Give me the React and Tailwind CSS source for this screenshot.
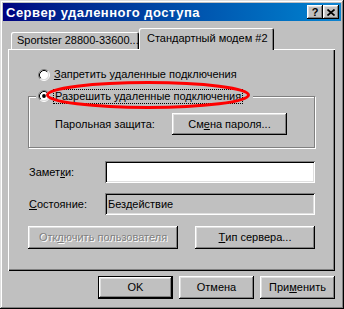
import React from "react";

const raised =
  "shadow-[inset_-1px_-1px_#000,inset_1px_1px_#fff,inset_-2px_-2px_#808080,inset_2px_2px_#dfdfdf]";
const sunken =
  "shadow-[inset_1px_1px_#808080,inset_-1px_-1px_#fff,inset_2px_2px_#000,inset_-2px_-2px_#dfdfdf]";

function Radio({ checked }) {
  return (
    <svg width="12" height="12" viewBox="0 0 12 12" className="shrink-0">
      <circle cx="6" cy="6" r="4.5" fill="#fff" />
      <path d="M2.11 9.89 A5.5 5.5 0 0 1 9.89 2.11" fill="none" stroke="#808080" strokeWidth="1" />
      <path d="M9.89 2.11 A5.5 5.5 0 0 1 2.11 9.89" fill="none" stroke="#fff" strokeWidth="1" />
      <path d="M2.82 9.18 A4.5 4.5 0 0 1 9.18 2.82" fill="none" stroke="#000" strokeWidth="1" />
      <path d="M9.18 2.82 A4.5 4.5 0 0 1 2.82 9.18" fill="none" stroke="#dfdfdf" strokeWidth="1" />
      {checked && <circle cx="6" cy="6" r="1.9" fill="#000" />}
    </svg>
  );
}

function U({ children }) {
  return <span className="underline underline-offset-[1px] decoration-1">{children}</span>;
}

export default function App() {
  return (
    <div className="relative w-[344px] h-[309px] bg-[#c0c0c0] p-[3px] font-['Liberation_Sans',Arial,sans-serif] text-[11px] leading-none text-black shadow-[inset_-1px_-1px_#000,inset_1px_1px_#dfdfdf,inset_-2px_-2px_#808080,inset_2px_2px_#fff]">
      {/* Title bar */}
      <div className="h-[18px] flex items-center bg-gradient-to-r from-[#000080] to-[#1084d0] pl-[3px] pr-[2px]">
        <span className="font-bold text-white text-[13px] tracking-[0.5px]">Сервер удаленного доступа</span>
        <div className="ml-auto flex">
          <div className={`w-[16px] h-[14px] bg-[#c0c0c0] flex items-center justify-center font-bold text-[11px] ${raised}`}>
            ?
          </div>
          <div className={`w-[16px] h-[14px] bg-[#c0c0c0] flex items-center justify-center ${raised}`}>
            <svg width="8" height="7" viewBox="0 0 8 7">
              <path d="M0.5 0.5 L7.5 6.5 M7.5 0.5 L0.5 6.5" stroke="#000" strokeWidth="1.7" />
            </svg>
          </div>
        </div>
      </div>

      {/* Tabs */}
      <div className="mt-[7px] ml-[5px] flex items-end h-[21px]">
        <div className="ml-[3px] w-[128px] h-[17px] flex items-center pl-[6px] rounded-t-[2px] shadow-[inset_1px_1px_#fff,inset_-1px_0_#000,inset_-2px_0_#808080]">
          Sportster 28800-33600...
        </div>
        <div className="relative z-10 -mb-px w-[135px] h-[22px] bg-[#c0c0c0] flex items-center pl-[8px] pb-[2px] rounded-t-[2px] shadow-[inset_1px_1px_#fff,inset_-1px_0_#000,inset_-2px_0_#808080]">
          Стандартный модем #2
        </div>
      </div>

      {/* Panel */}
      <div className="ml-[5px] w-[327px] h-[222px] pl-[20px] pt-[19px] shadow-[inset_1px_1px_#fff,inset_-1px_-1px_#000,inset_-2px_-2px_#808080]">
        <div className="ml-[10px] flex items-center h-[13px] gap-[4px]">
          <Radio />
          <span>
            <U>З</U>апретить удаленные подключения
          </span>
        </div>

        <fieldset className="mt-[8px] w-[287px] border border-[#808080] shadow-[inset_1px_1px_#fff,1px_1px_#fff] pl-[26px] pb-[12px]">
          <legend className="-ml-[19px] pl-[2px] pr-[10px] bg-[#c0c0c0]">
            <div className="flex items-center h-[14px] gap-[3px]">
              <Radio checked />
              <span className="border border-dotted border-black px-px py-[1px]">
                Разрешить удаленные подключения
              </span>
            </div>
          </legend>
          <div className="mt-[10px] flex items-center">
            <span className="w-[117px]">Парольная защита:</span>
            <div className={`w-[115px] h-[22px] flex items-center justify-center ${raised}`}>
              См<U>е</U>на пароля...
            </div>
          </div>
        </fieldset>

        <div className="mt-[13px] flex items-center">
          <span className="ml-px w-[76px]">
            Замет<U>к</U>и:
          </span>
          <div className={`w-[210px] h-[22px] bg-white ${sunken}`} />
        </div>

        <div className="mt-[10px] flex items-center">
          <span className="ml-px w-[76px]">
            <U>С</U>остояние:
          </span>
          <div className={`w-[210px] h-[22px] flex items-center pl-[3px] ${sunken}`}>Бездействие</div>
        </div>

        <div className="mt-[11px] flex">
          <div
            className={`w-[150px] h-[23px] flex items-center justify-center text-[#808080] [text-shadow:1px_1px_#fff] ${raised}`}
          >
            Отк<U>л</U>ючить пользователя
          </div>
          <div className={`ml-[17px] w-[120px] h-[23px] flex items-center justify-center ${raised}`}>
            <U>Т</U>ип сервера...
          </div>
        </div>
      </div>

      {/* Bottom buttons */}
      <div className="mt-[5px] ml-[95px] flex gap-[6px]">
        <div className="w-[75px] h-[23px] border border-black">
          <div className={`w-full h-full flex items-center justify-center ${raised}`}>OK</div>
        </div>
        <div className={`w-[75px] h-[23px] flex items-center justify-center ${raised}`}>Отмена</div>
        <div className={`w-[75px] h-[23px] flex items-center justify-center ${raised}`}>
          При<U>м</U>енить
        </div>
      </div>

      {/* Red hand-drawn ellipse */}
      <svg className="absolute left-[45px] top-[80px] pointer-events-none" width="206" height="30" viewBox="0 0 206 30">
        <ellipse cx="103" cy="15" rx="100.5" ry="12.5" fill="none" stroke="#ff0000" strokeWidth="3" />
      </svg>
    </div>
  );
}
